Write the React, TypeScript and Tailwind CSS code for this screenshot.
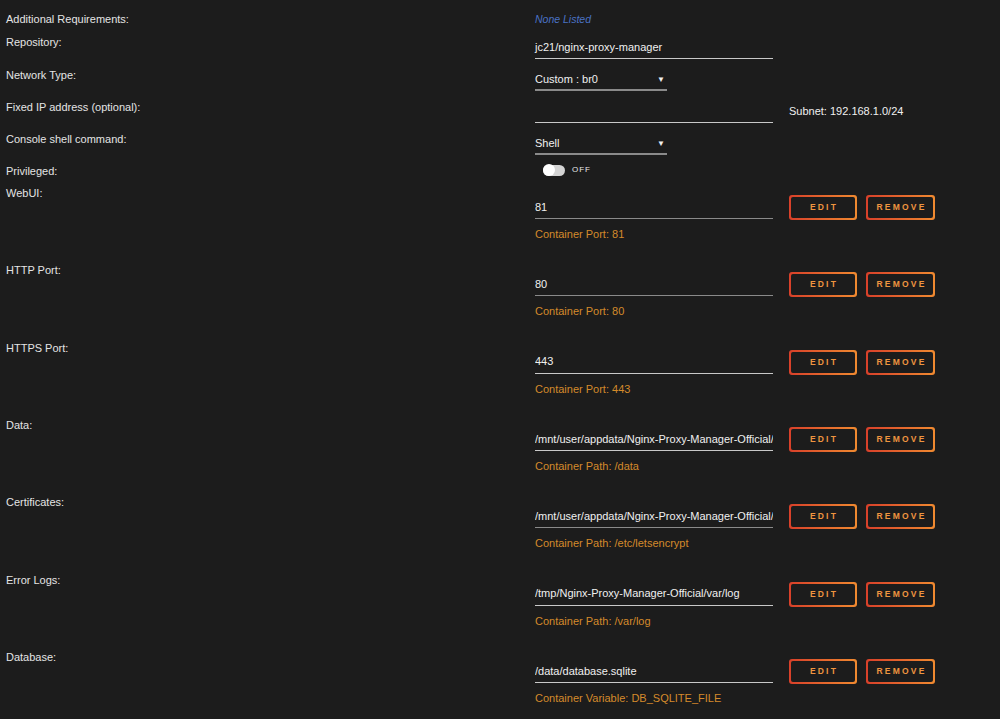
import React from "react";

const font = { fontFamily: '"Liberation Sans", Arial, sans-serif' };

function Btn({ label, w }: { label: string; w: string }) {
  return (
    <div className={`${w} h-[25px] rounded-[3px] p-[2px] bg-[linear-gradient(90deg,#d8402a,#f08a30)]`}>
      <div className="w-full h-full rounded-[2px] bg-[#1c1c1c] flex items-center justify-center text-[8.5px] font-bold tracking-[2.2px] text-[#ee9540] pl-[2px]">
        {label}
      </div>
    </div>
  );
}

type Cfg = { label: string; value: string; sub: string; light: boolean };

const cfgs: Cfg[] = [
  { label: "WebUI:", value: "81", sub: "Container Port: 81", light: false },
  { label: "HTTP Port:", value: "80", sub: "Container Port: 80", light: false },
  { label: "HTTPS Port:", value: "443", sub: "Container Port: 443", light: true },
  { label: "Data:", value: "/mnt/user/appdata/Nginx-Proxy-Manager-Official/", sub: "Container Path: /data", light: true },
  { label: "Certificates:", value: "/mnt/user/appdata/Nginx-Proxy-Manager-Official/", sub: "Container Path: /etc/letsencrypt", light: false },
  { label: "Error Logs:", value: "/tmp/Nginx-Proxy-Manager-Official/var/log", sub: "Container Path: /var/log", light: true },
  { label: "Database:", value: "/data/database.sqlite", sub: "Container Variable: DB_SQLITE_FILE", light: true },
];

function Label({ children }: { children: React.ReactNode }) {
  return <div className="w-[535px] shrink-0 pl-[6px] leading-[16px] text-[#e4e4e4]">{children}</div>;
}

export default function App() {
  return (
    <div style={font} className="w-[1000px] h-[719px] overflow-hidden bg-[#1c1c1c] text-[11px] text-[#f0f0f0] pt-[11px]">
      {/* Additional Requirements */}
      <div className="flex h-[23px]">
        <Label>Additional Requirements:</Label>
        <div className="leading-[16px] italic text-[#4a72c4] text-[10.5px]">None Listed</div>
      </div>
      {/* Repository */}
      <div className="flex h-[33px]">
        <Label>Repository:</Label>
        <div className="mt-[1px] w-[238px] h-[24px] border-b border-[#c8c8c8] flex items-center pt-[1px]">jc21/nginx-proxy-manager</div>
      </div>
      {/* Network */}
      <div className="flex h-[32px]">
        <Label>Network Type:</Label>
        <div className="mt-[1px] w-[132px] h-[23px] border-b-2 border-[#8a8a8a] flex items-center justify-between pr-[2px] pt-[2px]">
          <span>Custom : br0</span>
          <span className="text-[8px]">▼</span>
        </div>
      </div>
      {/* Fixed IP */}
      <div className="flex h-[32px]">
        <Label>Fixed IP address (optional):</Label>
        <div className="w-[238px] h-[24px] border-b border-[#c8c8c8]"></div>
        <div className="ml-[16px] leading-[24px]">Subnet: 192.168.1.0/24</div>
      </div>
      {/* Console */}
      <div className="flex h-[32px]">
        <Label>Console shell command:</Label>
        <div className="mt-[1px] w-[132px] h-[23px] border-b-2 border-[#8a8a8a] flex items-center justify-between pr-[2px] pt-[2px]">
          <span>Shell</span>
          <span className="text-[8px]">▼</span>
        </div>
      </div>
      {/* Privileged */}
      <div className="flex h-[22px]">
        <Label>Privileged:</Label>
        <div className="flex items-center h-[14px] pl-[8px]">
          <div className="relative w-[22px] h-[11px] rounded-full bg-[#d4d4d4]">
            <div className="absolute left-0 top-[-0.5px] w-[12px] h-[12px] rounded-full bg-white"></div>
          </div>
          <span className="ml-[7px] text-[8px] tracking-[1px] text-[#e8e8e8]">OFF</span>
        </div>
      </div>
      {cfgs.map((c, i) => (
        <div key={i} className="flex h-[77.33px]">
          <Label>{c.label}</Label>
          <div className="pt-[10px]">
            <div className="flex items-start">
              <div
                className={`w-[238px] h-[24px] border-b ${c.light ? "border-[#c8c8c8]" : "border-[#8a8a8a]"} flex items-center pt-[1px] whitespace-nowrap overflow-hidden`}
              >
                {c.value}
              </div>
              <div className="ml-[16px] flex gap-[9px]">
                <Btn label="EDIT" w="w-[68px]" />
                <Btn label="REMOVE" w="w-[69px]" />
              </div>
            </div>
            <div className="mt-[6px] leading-[16px] text-[#d48a2b]">{c.sub}</div>
          </div>
        </div>
      ))}
    </div>
  );
}
